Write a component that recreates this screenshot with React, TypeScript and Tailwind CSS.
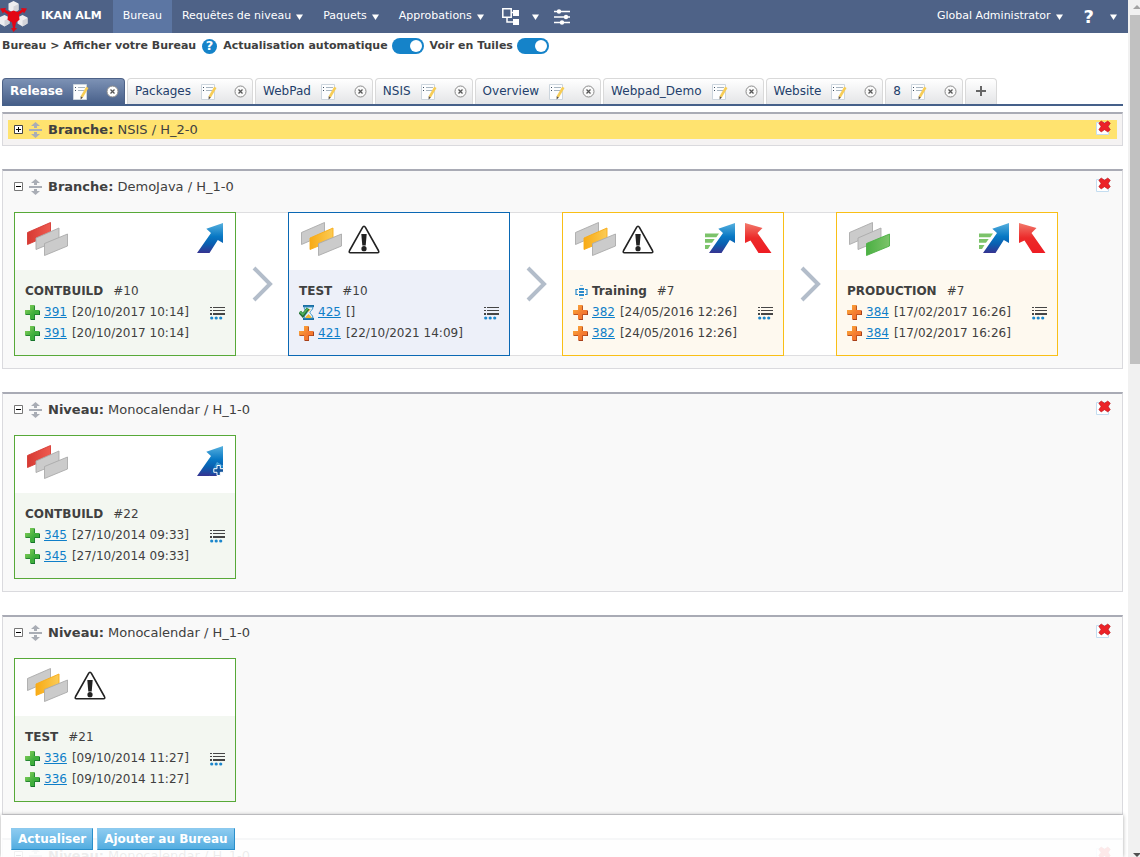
import React, { useId } from "react";

type Tone = "green" | "blue" | "yellow";
type Run = { id: string; date: string; status: "ok" | "warn" | "running" };
type Level = {
  name: string;
  build: string;
  tone: Tone;
  phase: 0 | 1 | 2;
  locked?: boolean;
  project?: boolean;
  actions: ("request" | "add" | "deliver" | "rollback")[];
  runs: Run[];
};

const TONES: Record<Tone, { border: string; body: string }> = {
  green: { border: "border-[#57a938]", body: "bg-[#f3f7f1]" },
  blue: { border: "border-[#0a68b4]", body: "bg-[#edf0f9]" },
  yellow: { border: "border-[#f9bf16]", body: "bg-[#fef9ef]" },
};

const PHASES = [
  ["#ef5a50", "#d63a33"],
  ["#fbcb55", "#f8ab16"],
  ["#7cc36a", "#4bb043"],
];

const DEMO_JAVA: Level[] = [
  {
    name: "CONTBUILD", build: "#10", tone: "green", phase: 0, actions: ["request"],
    runs: [
      { id: "391", date: "[20/10/2017 10:14]", status: "ok" },
      { id: "391", date: "[20/10/2017 10:14]", status: "ok" },
    ],
  },
  {
    name: "TEST", build: "#10", tone: "blue", phase: 1, locked: true, actions: [],
    runs: [
      { id: "425", date: "[]", status: "running" },
      { id: "421", date: "[22/10/2021 14:09]", status: "warn" },
    ],
  },
  {
    name: "Training", build: "#7", tone: "yellow", phase: 1, locked: true, project: true, actions: ["deliver", "rollback"],
    runs: [
      { id: "382", date: "[24/05/2016 12:26]", status: "warn" },
      { id: "382", date: "[24/05/2016 12:26]", status: "warn" },
    ],
  },
  {
    name: "PRODUCTION", build: "#7", tone: "yellow", phase: 2, actions: ["deliver", "rollback"],
    runs: [
      { id: "384", date: "[17/02/2017 16:26]", status: "warn" },
      { id: "384", date: "[17/02/2017 16:26]", status: "warn" },
    ],
  },
];

const MONO_BUILD: Level[] = [
  {
    name: "CONTBUILD", build: "#22", tone: "green", phase: 0, actions: ["add"],
    runs: [
      { id: "345", date: "[27/10/2014 09:33]", status: "ok" },
      { id: "345", date: "[27/10/2014 09:33]", status: "ok" },
    ],
  },
];

const MONO_TEST: Level[] = [
  {
    name: "TEST", build: "#21", tone: "green", phase: 1, locked: true, actions: [],
    runs: [
      { id: "336", date: "[09/10/2014 11:27]", status: "ok" },
      { id: "336", date: "[09/10/2014 11:27]", status: "ok" },
    ],
  },
];

const TABS = ["Release", "Packages", "WebPad", "NSIS", "Overview", "Webpad_Demo", "Website", "8"];

function Logo() {
  return (
    <svg width="28" height="33" viewBox="0 0 28 33" className="shrink-0">
      <g fill="#eeeef0">
        <path d="M13.500 1l5 2.500v6.500l-5 3-5-3V3.500z" />
        <path d="M4.500 15l5 2.500v6l-5 3L-1 23.500v-6z" />
        <path d="M22.500 15l5 2.500v6l-5 3-5-3v-6z" />
      </g>
      <g fill="#d3d4d9">
        <path d="M13.500 6.500l5-2.500v6l-5 3z" />
        <path d="M4.500 20.500l5-2.500v5.500l-5 3z" />
        <path d="M22.500 20.500l5-2.500v5.500l-5 3z" />
      </g>
      <path
        fill="#e30613"
        d="M0 8.500L6 8l-.8 1.800L9.500 12l4-1.500 4 1.500 4.300-2.200L21 8l6 .5-3 5-1-1.700-4 3 .5 5-3.500 2.700-1 5.500h2L13.500 32 11 28h2l-1-5.500L7.500 19.800l.5-5-4-3-1 1.700z"
      />
    </svg>
  );
}

function Caret() {
  return (
    <svg width="7" height="6" viewBox="0 0 7 6" className="shrink-0">
      <path fill="#fff" d="M0 .5h7L3.500 6z" />
    </svg>
  );
}

function EditIcon() {
  return (
    <svg width="16" height="16" viewBox="0 0 16 16" className="shrink-0">
      <path fill="#fcfdfe" stroke="#ccd5dd" d="M.5.5h13v15H.5z" />
      <path fill="none" stroke="#a9b6c1" d="M5 3.500h7M5 6.500h6" />
      <path fill="none" stroke="#3f4e60" strokeWidth="1.200" d="M2 3.500h1M2 6.500h1" />
      <path fill="#f6cc55" d="M13.200 2.800l2.300 1.200-5.600 9.500-2.300-1.200z" />
      <path fill="#5c5040" d="M7.600 12.300l2.300 1.200-2.300 2z" />
    </svg>
  );
}

function CloseIcon({ active }: { active?: boolean }) {
  return (
    <svg width="13" height="13" viewBox="0 0 13 13">
      <circle cx="6.500" cy="6.500" r="5.500" fill={active ? "#fff" : "#fafafa"} stroke="#8a8a8a" />
      <path fill="none" stroke="#555" strokeWidth="1.300" d="M4.500 4.500l4 4M8.500 4.500l-4 4" />
    </svg>
  );
}

function DeleteIcon() {
  return (
    <svg width="15" height="16" viewBox="0 0 15 16">
      <path fill="#fff" stroke="#c4ddf0" d="M.5 2.500h12v12H.5z" />
      <path
        fill="#ec2227"
        stroke="#b9161b"
        strokeWidth=".6"
        d="M5.200 1L8.500 3.200 11.800 1l2.500 2.200L12.200 6.500l2.100 3.200-2.500 2.200-3.300-2.200-3.300 2.200-2.400-2.200L5 6.500 2.800 3.200z"
      />
    </svg>
  );
}

function MoveIcon() {
  return (
    <svg width="13" height="16" viewBox="0 0 13 16" className="shrink-0">
      <path fill="#a9adb5" d="M6.500 0L11 4H8v2H5V4H2zM0 7h13v2H0zM5 10h3v2h3l-4.500 4L2 12h3z" />
    </svg>
  );
}

function ExpandIcon({ open }: { open: boolean }) {
  return (
    <svg width="9" height="9" viewBox="0 0 9 9">
      <path fill="#fff" stroke={open ? "#777" : "#444"} d="M.5.5h8v8h-8z" />
      <path fill="none" stroke="#000" d={open ? "M2 4.500h5" : "M2 4.500h5M4.500 2v5"} />
    </svg>
  );
}

function PhaseIcon({ phase }: { phase: 0 | 1 | 2 }) {
  const gid = useId();
  const shapes = ["M.5 10.500L23.500.5v12L.5 22.500z", "M9 16L32 6v12L9 27.500z", "M17.500 21.500L40.500 12v12L17.500 33.500z"];
  return (
    <svg width="41" height="34" viewBox="0 0 41 34" className="shrink-0">
      <defs>
        <linearGradient id={gid} x1="0" x2="1">
          <stop offset="0" stopColor={PHASES[phase][1]} />
          <stop offset="1" stopColor={PHASES[phase][0]} />
        </linearGradient>
      </defs>
      {shapes.map((d, i) => (
        <path
          key={d}
          d={d}
          fill={i === phase ? `url(#${gid})` : "#cbcbcb"}
          stroke={i === phase ? PHASES[phase][1] : "#aaaaaa"}
          strokeWidth=".9"
        />
      ))}
    </svg>
  );
}

function WarningIcon() {
  return (
    <svg width="32" height="29" viewBox="0 0 32 29" className="shrink-0">
      <path fill="#fff" stroke="#222" strokeWidth="1.600" strokeLinejoin="round" d="M16 1.300Q16.800 1.300 17.400 2.400L30.400 25.500Q31.500 27.800 29.500 27.800H2.500Q.500 27.800 1.600 25.500L14.600 2.400Q15.200 1.300 16 1.300z" />
      <path fill="#222" d="M13.300 9h5.400l-1 11.500h-3.400z" />
      <circle cx="16" cy="23.700" r="2.600" fill="#222" />
    </svg>
  );
}

function ArrowIcon({ kind }: { kind: Level["actions"][number] }) {
  const gid = useId();
  if (kind === "rollback") {
    return (
      <svg width="27" height="31" viewBox="0 0 27 31">
        <defs>
          <linearGradient id={gid} x1="0" y1="0" x2="0" y2="1">
            <stop offset="0" stopColor="#f27a6c" />
            <stop offset=".5" stopColor="#ec2a2a" />
            <stop offset="1" stopColor="#ee1c23" />
          </linearGradient>
        </defs>
        <path fill={`url(#${gid})`} d="M0 0L17.500 5 12.500 10 26.500 30H13.500L5.500 17.500 0 20z" />
      </svg>
    );
  }
  const speed = kind === "deliver";
  return (
    <svg width={speed ? 31 : 27} height="31" viewBox={speed ? "-4 0 31 31" : "0 0 27 31"}>
      <defs>
        <linearGradient id={gid} x1="0" y1="0" x2="0" y2="1">
          <stop offset="0" stopColor="#56b0de" />
          <stop offset=".45" stopColor="#0878c4" />
          <stop offset=".7" stopColor="#0a5fb0" />
          <stop offset="1" stopColor="#363391" />
        </linearGradient>
      </defs>
      {speed && (
        <path fill="#7cc36a" d="M-4 10.500H10L7.300 14.300H-4zM-4 16H5.700L3 19.800H-4zM-4 22H1.500L-1 26H-4z" />
      )}
      <path fill={`url(#${gid})`} d="M26 0V20L20.800 17 12.500 30H0L14 10 9.300 5.800z" />
      {kind === "add" && (
        <>
          <path fill={`url(#${gid})`} d="M20 16L26 20V22L20 30H12z" />
          <path fill="#14549c" stroke="#fff" strokeWidth="1" d="M20 19.500h3.300v3.200h3.200v3.600h-3.200v3.200H20v-3.200h-3.200v-3.600H20z" />
        </>
      )}
    </svg>
  );
}

function StatusIcon({ status }: { status: Run["status"] }) {
  const gid = useId();
  if (status === "running") {
    return (
      <svg width="15" height="15" viewBox="0 0 15 15" className="shrink-0">
        <path fill="#1b6fa3" d="M4 0h11v2H4zM4 13h11v2H4z" />
        <path fill="#e5f4fd" stroke="#3c91c4" d="M5 2h9c0 3-3 4-3 5.500S14 10 14 13H5c0-3 3-4 3-5.500S5 5 5 2z" />
        <path fill="#f2b632" d="M7.500 4h4.200L9.600 7zM6.500 13c0-2 2-2.500 3-4 1 1.500 3 2 3 4z" />
        <path fill="none" stroke="#236b35" strokeWidth="3.400" d="M.8 7l3 3.300L9 3.500" />
        <path fill="none" stroke="#4eb05a" strokeWidth="1.800" d="M.8 6.700l3 2.800L8.800 3.300" />
      </svg>
    );
  }
  const [light, main, dark] = status === "ok" ? ["#8fd35f", "#3fae3c", "#16752c"] : ["#fbb03b", "#f47a30", "#a8401a"];
  return (
    <svg width="15" height="15" viewBox="0 0 15 15" className="shrink-0">
      <defs>
        <linearGradient id={gid} x1="0" y1="0" x2="1" y2="1">
          <stop offset="0" stopColor={light} />
          <stop offset=".6" stopColor={main} />
          <stop offset="1" stopColor={main} />
        </linearGradient>
      </defs>
      <path fill={dark} d="M5.500.5H10V5.500H15V10H10V15H5.500V10H.500V5.500H5.500z" />
      <path fill={`url(#${gid})`} d="M5 0h4.300v5H14v4.300H9.300V14H5V9.300H0V5h5z" />
    </svg>
  );
}

function ListIcon() {
  return (
    <svg width="15" height="14" viewBox="0 0 15 14">
      <path fill="#454545" d="M0 1h2v1H0zM3 1h12v1H3zM0 4h2v1H0zM3 4h12v1H3zM0 7h2v2H0zM3 7h12v2H3z" />
      <g fill="#1b86cc">
        <circle cx="1.700" cy="12" r="1.600" />
        <circle cx="6.200" cy="12" r="1.600" />
        <circle cx="10.700" cy="12" r="1.600" />
      </g>
    </svg>
  );
}

function ProjectIcon() {
  return (
    <svg width="13" height="14" viewBox="0 0 13 14" className="mr-1 ml-[2px] shrink-0">
      <path fill="none" stroke="#2a8acb" strokeWidth="1.200" d="M3 4.500H1v5h2M10 4.500h2v5h-2" />
      <path fill="#8cc3e6" d="M5 0h3v1H5zM5 13h3v1H5z" />
      <path fill="#2a8acb" d="M4 3h5v2H4zM4 6h5v2H4zM4 9h5v2H4z" />
    </svg>
  );
}

function Toggle({ label }: { label: string }) {
  return (
    <label className="flex items-center gap-1">
      {label}
      <input
        type="checkbox"
        defaultChecked
        className="h-4 w-8 appearance-none rounded-full bg-[#c4c4c4] p-[2px] before:block before:size-3 before:rounded-full before:bg-white checked:bg-[#1583c9] checked:before:ml-auto"
      />
    </label>
  );
}

function NavItem({ label }: { label: string }) {
  return (
    <button type="button" className="flex items-center gap-[5px] px-[10px]">
      {label}
      <Caret />
    </button>
  );
}

function LevelCard({ level }: { level: Level }) {
  const tone = TONES[level.tone];
  return (
    <article className={`w-[222px] shrink-0 border bg-white ${tone.border}`}>
      <div className="flex h-[57px] gap-[6px] pt-[9px] pr-[11px] pl-3">
        <PhaseIcon phase={level.phase} />
        {level.locked && (
          <div className="mt-[3px]">
            <WarningIcon />
          </div>
        )}
        <div className="ml-auto flex gap-[9px] pt-px">
          {level.actions.map((kind) => (
            <button key={kind} type="button" aria-label={kind} className="flex items-start">
              <ArrowIcon kind={kind} />
            </button>
          ))}
        </div>
      </div>
      <div className={`h-[85px] px-[10px] pt-[11px] text-xs leading-[21px] ${tone.body}`}>
        <h3 className="flex items-center">
          {level.project && <ProjectIcon />}
          <b>{level.name}</b>
          <span className="ml-[10px]">{level.build}</span>
        </h3>
        <ul>
          {level.runs.map((run, i) => (
            <li key={i} className="flex h-[21px] items-center">
              <StatusIcon status={run.status} />
              <a href="#run" className="ml-1 text-[#0f7fc9] underline">{run.id}</a>
              <span className="ml-[5px]">{run.date}</span>
              {i === 0 && (
                <button type="button" aria-label="Historique" className="ml-auto">
                  <ListIcon />
                </button>
              )}
            </li>
          ))}
        </ul>
      </div>
    </article>
  );
}

function Panel({ kind, title, levels, collapsed }: { kind: string; title: string; levels?: Level[]; collapsed?: boolean }) {
  return (
    <section
      className={`border border-t-2 border-[#dadade] border-t-[#a9abb5] px-[5px] pt-[6px] ${collapsed ? "bg-[#f5f3f3] pb-[6px]" : "bg-[#f9f9f9] pb-3"}`}
    >
      <header className={`flex h-[19px] items-center pr-1 pl-[6px] text-[13px] ${collapsed ? "bg-[#ffe36f]" : ""}`}>
        <button type="button" aria-label="Ouvrir ou fermer">
          <ExpandIcon open={!collapsed} />
        </button>
        <span className="mr-[6px] ml-[6px]">
          <MoveIcon />
        </span>
        <h2>
          <b>{kind}</b> {title}
        </h2>
        <button type="button" aria-label="Supprimer" className="mr-[2px] ml-auto pb-1">
          <DeleteIcon />
        </button>
      </header>
      {levels && (
        <div className="mt-4 ml-[6px] flex">
          {levels.map((level, i) => (
            <React.Fragment key={level.name}>
              {i > 0 && (
                <div className="flex w-[52px] shrink-0 items-center justify-center border-y border-[#dedee0] bg-white">
                  <svg width="21" height="36" viewBox="0 0 21 36">
                    <path fill="none" stroke="#b3bdca" strokeWidth="4" d="M2 2l16 16L2 34" />
                  </svg>
                </div>
              )}
              <LevelCard level={level} />
            </React.Fragment>
          ))}
        </div>
      )}
    </section>
  );
}

export default function App() {
  return (
    <div className="flex h-screen overflow-hidden bg-white font-['Verdana','DejaVu_Sans',sans-serif] text-[#404040]">
      <div className="relative min-w-0 flex-1 overflow-hidden">
        <nav className="flex h-[33px] items-stretch bg-[#4e6287] text-[11px] whitespace-nowrap text-white">
          <Logo />
          <a href="#home" className="flex items-center pr-[11px] pl-[13px] font-bold">IKAN ALM</a>
          <a href="#bureau" className="flex items-center bg-[#5c76a3] px-[10px]">Bureau</a>
          <NavItem label="Requêtes de niveau" />
          <NavItem label="Paquets" />
          <NavItem label="Approbations" />
          <button type="button" aria-label="Projets" className="flex items-center gap-[13px] pr-[10px] pl-2">
            <svg width="17" height="17" viewBox="0 0 17 17">
              <path fill="none" stroke="#fff" strokeWidth="1.500" d="M.800.800h8.400v8.400H.800zM9 4.500h3M5 9v5h6" />
              <path fill="#fff" d="M11 2h6v6h-6zM11 11h6v6h-6z" />
            </svg>
            <Caret />
          </button>
          <button type="button" aria-label="Paramètres" className="px-1">
            <svg width="18" height="16" viewBox="0 0 18 16">
              <path fill="none" stroke="#fff" strokeWidth="1.600" d="M1 2.500h16M1 8h16M1 13.500h16" />
              <circle cx="6" cy="2.500" r="2.200" fill="#fff" />
              <circle cx="13" cy="8" r="2.200" fill="#fff" />
              <circle cx="9" cy="13.500" r="2.200" fill="#fff" />
            </svg>
          </button>
          <div className="ml-auto flex">
            <NavItem label="Global Administrator" />
            <button type="button" aria-label="Aide" className="flex items-center gap-4 px-[11px]">
              <span className="text-lg font-bold">?</span>
              <Caret />
            </button>
          </div>
        </nav>

        <div className="flex h-[26px] items-center gap-[6px] pl-[2px] text-[11px] font-bold whitespace-nowrap">
          <span>Bureau &gt; Afficher votre Bureau</span>
          <button type="button" aria-label="Aide sur cette page" className="flex size-[15px] items-center justify-center rounded-full bg-[#1583c9] text-[13px] text-white">
            ?
          </button>
          <Toggle label="Actualisation automatique" />
          <Toggle label="Voir en Tuiles" />
        </div>

        <main className="mr-[5px] ml-px pl-px">
          <div className="mt-[19px] flex h-[28px] items-start gap-[2px] border-b-2 border-[#45608a] text-xs">
            {TABS.map((tab, i) => (
              <div
                key={tab}
                className={`flex h-[26px] items-center rounded-t border border-b-0 pr-[5px] pl-[7px] ${
                  i === 0
                    ? "border-[#4e6287] bg-linear-to-b from-[#7d92b5] to-[#48608a] font-bold text-white"
                    : "border-[#d9d9d9] bg-linear-to-b from-white to-[#e4e5e7] text-[#243f6b]"
                }`}
              >
                <a href="#tab" className="pb-[2px]">{tab}</a>
                <button type="button" aria-label={`Modifier ${tab}`} className="mr-[17px] ml-[10px]">
                  <EditIcon />
                </button>
                <button type="button" aria-label={`Fermer ${tab}`}>
                  <CloseIcon active={i === 0} />
                </button>
              </div>
            ))}
            <button
              type="button"
              aria-label="Ajouter un onglet"
              className="flex h-[26px] w-8 items-center justify-center rounded-t border border-b-0 border-[#d9d9d9] bg-linear-to-b from-white to-[#e4e5e7] pb-[2px]"
            >
              <svg width="10" height="10" viewBox="0 0 10 10">
                <path fill="#666" d="M4 0h2v4h4v2H6v4H4V6H0V4h4z" />
              </svg>
            </button>
          </div>

          <div className="mt-[6px] flex flex-col gap-[23px]">
            <Panel kind="Branche:" title="NSIS / H_2-0" collapsed />
            <Panel kind="Branche:" title="DemoJava / H_1-0" levels={DEMO_JAVA} />
            <Panel kind="Niveau:" title="Monocalendar / H_1-0" levels={MONO_BUILD} />
            <Panel kind="Niveau:" title="Monocalendar / H_1-0" levels={MONO_TEST} />
            <Panel kind="Niveau:" title="Monocalendar / H_1-0" levels={MONO_BUILD} />
          </div>
        </main>

        <footer className="absolute right-[5px] bottom-0 left-px flex h-[42px] gap-1 bg-white/90 px-[10px] pt-[13px] shadow-[0_0_4px_rgba(0,0,0,0.35)]">
          {["Actualiser", "Ajouter au Bureau"].map((label) => (
            <button
              key={label}
              type="button"
              className="flex h-[22px] items-center border border-[#8cc9ee] border-r-[#2b8fca] border-b-[#2b8fca] bg-linear-to-b from-[#8ccbf0] to-[#52ade0] px-[6px] text-xs font-bold text-white"
            >
              {label}
            </button>
          ))}
        </footer>
      </div>

      <div aria-hidden="true" className="flex w-3 shrink-0 flex-col bg-[#f1f1f1] pl-[2px]">
        <svg width="10" height="15" viewBox="0 0 10 15">
          <path fill="#a3a3a3" d="M3 9l4-4 4 4z" />
        </svg>
        <div className="h-[349px] bg-[#c1c1c1]" />
        <svg width="10" height="15" viewBox="0 0 10 15" className="mt-auto">
          <path fill="#505050" d="M3 11l4 4 4-4z" />
        </svg>
      </div>
    </div>
  );
}
